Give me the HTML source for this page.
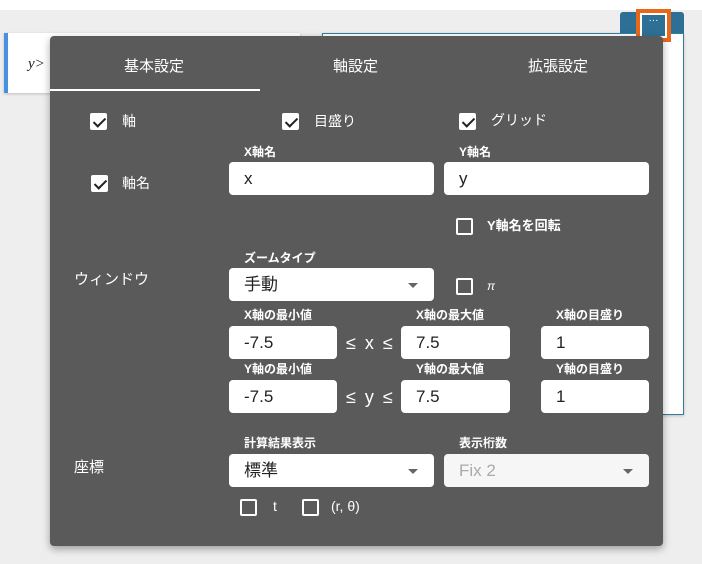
<!DOCTYPE html>
<html><head><meta charset="utf-8"><style>
*{box-sizing:border-box;margin:0;padding:0}
body{width:702px;height:564px;overflow:hidden;background:#eeeeee;position:relative;font-family:"Liberation Sans","Noto Sans CJK JP",sans-serif;color:#fff}
.a{position:absolute}
.lbl{position:absolute;font-size:12px;font-weight:bold;color:#fff;line-height:14px}
.t{position:absolute;font-size:14px;color:#fff;line-height:16px}
.cb{position:absolute;width:17px;height:17px;border:2px solid #fff;border-radius:2px}
.cb.on{background:#fff}
.cb.on::after{content:"";position:absolute;left:4px;top:0px;width:5px;height:10px;border:solid #222;border-width:0 2px 2px 0;transform:rotate(45deg)}
.in{position:absolute;background:#fff;border-radius:4px;height:33px;color:#222;font-size:17px;line-height:33px;padding-left:15px}
.sel::after{content:"";position:absolute;right:16px;top:15px;border-left:5px solid transparent;border-right:5px solid transparent;border-top:5px solid #666}
.le{position:absolute;font-size:18px;color:#fff;line-height:18px;letter-spacing:2px}
</style></head><body>
<div class="a" style="left:0;top:0;width:702px;height:10px;background:#fff"></div>
<div class="a" style="left:4px;top:33px;width:296px;height:60px;background:#fff;border-left:4px solid #4a90e2;box-shadow:0 1px 3px rgba(0,0,0,.2)"></div>
<div class="a" style="left:28px;top:56px;font-family:'Liberation Serif',serif;font-style:italic;font-size:15px;color:#222">y&gt;</div>
<div class="a" style="left:322px;top:33px;width:362px;height:382px;background:#fff;border:1px solid #2e7fa0;box-shadow:0 1px 3px rgba(0,0,0,.2)"></div>
<div class="a" style="left:620px;top:12px;width:64px;height:21px;background:#2e6f96;border-radius:3px 3px 0 0"></div>
<div class="a" style="left:636px;top:9px;width:35px;height:33px;background:#e8681a"></div>
<div class="a" style="left:640px;top:13px;width:27px;height:25px;background:#fff"></div>
<div class="a" style="left:642px;top:15px;width:23px;height:21px;background:#2e6f96;color:#fff;font-size:10px;text-align:center;line-height:12px">···</div>

<div class="a" style="left:50px;top:36px;width:613px;height:510px;background:#5a5a5a;border-radius:4px;box-shadow:0 3px 8px rgba(0,0,0,.35)"></div>
<div class="t" style="left:124px;top:59px;font-size:15px">基本設定</div>
<div class="t" style="left:333px;top:59px;font-size:15px">軸設定</div>
<div class="t" style="left:528px;top:59px;font-size:15px">拡張設定</div>
<div class="a" style="left:50px;top:89px;width:210px;height:2px;background:#fff"></div>

<div class="cb on" style="left:90px;top:113px"></div><div class="t" style="left:122px;top:113px">軸</div>
<div class="cb on" style="left:282px;top:113px"></div><div class="t" style="left:314px;top:113px">目盛り</div>
<div class="cb on" style="left:459px;top:113px"></div><div class="t" style="left:491px;top:112px">グリッド</div>

<div class="lbl" style="left:244px;top:145px">X軸名</div>
<div class="lbl" style="left:459px;top:145px">Y軸名</div>
<div class="in" style="left:229px;top:162px;width:205px">x</div>
<div class="in" style="left:444px;top:162px;width:205px">y</div>
<div class="cb on" style="left:91px;top:175px"></div><div class="t" style="left:122px;top:175px">軸名</div>
<div class="cb" style="left:456px;top:218px"></div><div class="lbl" style="left:487px;top:219px;font-size:13px">Y軸名を回転</div>

<div class="lbl" style="left:244px;top:251px">ズームタイプ</div>
<div class="in sel" style="left:229px;top:268px;width:205px">手動</div>
<div class="t" style="left:74px;top:272px;font-size:15px">ウィンドウ</div>
<div class="cb" style="left:456px;top:278px"></div><div class="t" style="left:487px;top:278px;font-size:12px;font-style:italic">π</div>

<div class="lbl" style="left:244px;top:308px">X軸の最小値</div>
<div class="lbl" style="left:416px;top:308px">X軸の最大値</div>
<div class="lbl" style="left:556px;top:308px">X軸の目盛り</div>
<div class="in" style="left:229px;top:326px;width:108px">-7.5</div>
<div class="le" style="left:346px;top:334px">≤ x ≤</div>
<div class="in" style="left:401px;top:326px;width:109px">7.5</div>
<div class="in" style="left:541px;top:326px;width:108px">1</div>

<div class="lbl" style="left:244px;top:362px">Y軸の最小値</div>
<div class="lbl" style="left:416px;top:362px">Y軸の最大値</div>
<div class="lbl" style="left:556px;top:362px">Y軸の目盛り</div>
<div class="in" style="left:229px;top:380px;width:108px">-7.5</div>
<div class="le" style="left:346px;top:388px">≤ y ≤</div>
<div class="in" style="left:401px;top:380px;width:109px">7.5</div>
<div class="in" style="left:541px;top:380px;width:108px">1</div>

<div class="lbl" style="left:244px;top:436px">計算結果表示</div>
<div class="lbl" style="left:459px;top:436px">表示桁数</div>
<div class="in sel" style="left:229px;top:454px;width:205px">標準</div>
<div class="in sel" style="left:444px;top:454px;width:205px;color:#aaa;background:#f6f6f6">Fix 2</div>
<div class="t" style="left:74px;top:460px;font-size:15px">座標</div>

<div class="cb" style="left:240px;top:499px"></div><div class="t" style="left:273px;top:498px">t</div>
<div class="cb" style="left:302px;top:499px"></div><div class="t" style="left:331px;top:498px">(r, θ)</div>
</body></html>
